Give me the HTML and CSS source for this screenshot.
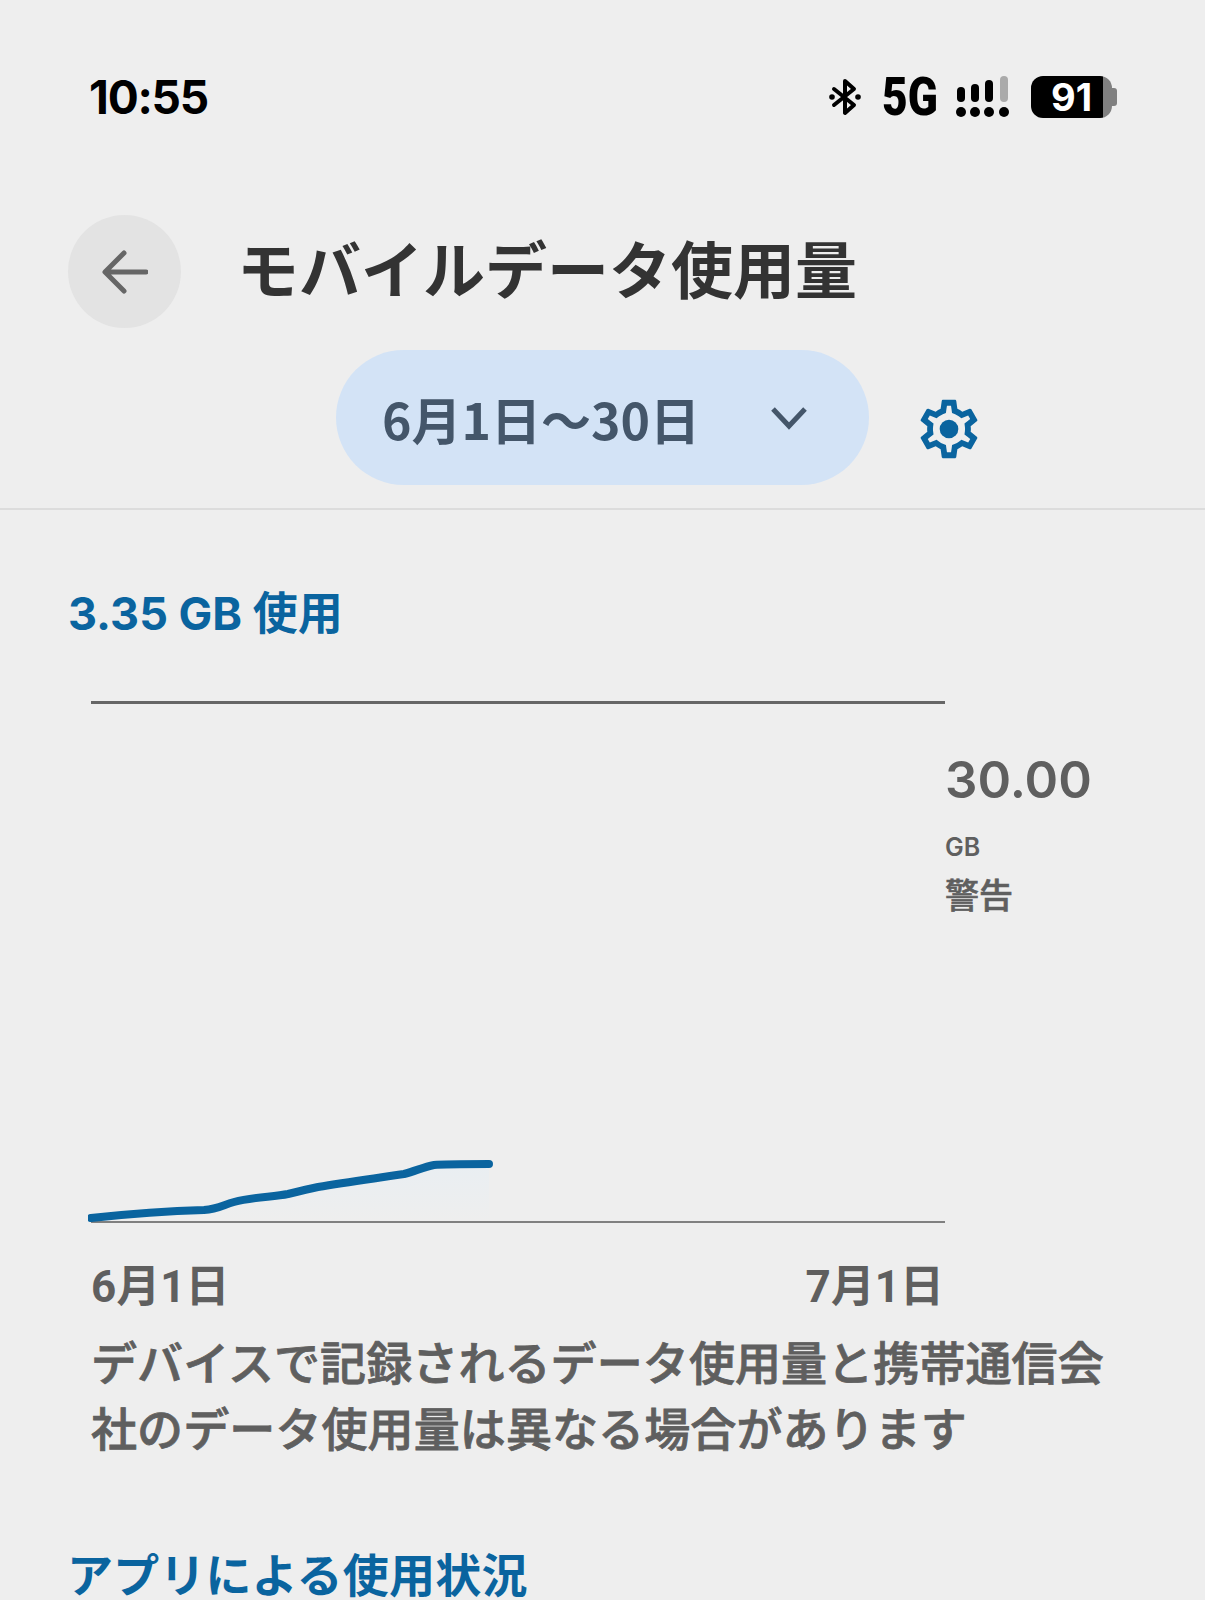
FILE: index.html
```html
<!DOCTYPE html>
<html lang="ja">
<head>
  <meta charset="UTF-8">
  <meta name="viewport" content="width=device-width, initial-scale=1.0">
  <title>モバイルデータ使用量</title>
  <link rel="stylesheet" href="styles.css">
</head>
<body>
  <div class="status-bar">
    <span class="status-time">10:55</span>
    <div class="status-icons">
      <svg class="icon-bluetooth" width="32" height="38" viewBox="0 0 32 38">
        <path d="M5 11 L25 27 L16 35 V3 L25 11 L5 27" fill="none" stroke="#000" stroke-width="4" stroke-linecap="round" stroke-linejoin="round"/>
        <circle cx="3" cy="19" r="2.8" fill="#000"/>
        <circle cx="29" cy="19" r="2.8" fill="#000"/>
      </svg>
      <span class="status-network">5G</span>
      <svg class="icon-signal" width="54" height="42" viewBox="0 0 54 42">
        <rect x="2" y="11" width="8" height="15" rx="4" fill="#000"/>
        <rect x="16" y="8" width="8" height="18" rx="4" fill="#000"/>
        <rect x="30" y="4" width="8" height="22" rx="4" fill="#000"/>
        <rect x="45" y="0" width="8" height="26" rx="4" fill="#aaa"/>
        <circle cx="6" cy="36" r="5" fill="#000"/>
        <circle cx="20" cy="36" r="5" fill="#000"/>
        <circle cx="34" cy="36" r="5" fill="#000"/>
        <circle cx="49" cy="36" r="5" fill="#000"/>
      </svg>
      <div class="battery">
        <div class="battery-body"><span>91</span></div>
        <div class="battery-tip"></div>
      </div>
    </div>
  </div>

  <div class="page-header">
    <button class="back-btn" type="button">
      <svg width="46" height="46" viewBox="0 0 46 46">
        <path d="M44 23 H4 M22 4 L3 23 L22 42" fill="none" stroke="#666" stroke-width="5" stroke-linecap="round" stroke-linejoin="round"/>
      </svg>
    </button>
    <h1>モバイルデータ使用量</h1>
  </div>

  <div class="cycle-row">
    <div class="cycle-pill">
      <span>6月1日〜30日</span>
      <svg width="36" height="24" viewBox="0 0 36 24">
        <path d="M2 3 L18 20 L34 3" fill="none" stroke="#44566a" stroke-width="5"/>
      </svg>
    </div>
    <svg class="icon-gear" width="70" height="70" viewBox="0 0 24 24">
      <path fill="#0a649f" d="M19.43 12.98c.04-.32.07-.64.07-.98s-.03-.66-.07-.98l2.11-1.65c.19-.15.24-.42.12-.64l-2-3.46c-.12-.22-.39-.3-.61-.22l-2.49 1c-.52-.4-1.08-.73-1.69-.98l-.38-2.65C14.46 2.18 14.25 2 14 2h-4c-.25 0-.46.18-.49.42l-.38 2.65c-.61.25-1.17.59-1.69.98l-2.49-1c-.23-.09-.49 0-.61.22l-2 3.46c-.13.22-.07.49.12.64l2.11 1.65c-.04.32-.07.65-.07.98s.03.66.07.98l-2.11 1.65c-.19.15-.24.42-.12.64l2 3.46c.12.22.39.3.61.22l2.49-1c.52.4 1.08.73 1.69.98l.38 2.65c.03.24.24.42.49.42h4c.25 0 .46-.18.49-.42l.38-2.65c.61-.25 1.17-.59 1.69-.98l2.49 1c.23.09.49 0 .61-.22l2-3.46c.12-.22.07-.49-.12-.64l-2.11-1.65zM17.45 11.27c.04.31.05.52.05.73 0 .21-.02.43-.05.73l-.14 1.13.89.7 1.08.84-.7 1.21-1.27-.51-1.04-.42-.9.68c-.43.32-.84.56-1.25.73l-1.06.43-.16 1.13-.2 1.35h-1.4l-.19-1.35-.16-1.13-1.06-.43c-.43-.18-.83-.41-1.23-.71l-.91-.7-1.06.43-1.27.51-.7-1.21 1.08-.84.89-.7-.14-1.13c-.03-.31-.05-.54-.05-.74s.02-.43.05-.73l.14-1.13-.89-.7-1.08-.84.7-1.21 1.27.51 1.04.42.9-.68c.43-.32.84-.56 1.25-.73l1.06-.43.16-1.13.2-1.35h1.39l.19 1.35.16 1.13 1.06.43c.43.18.83.41 1.23.71l.91.7 1.06-.43 1.27-.51.7 1.21-1.07.85-.89.7.14 1.13z"/>
      <circle cx="12" cy="12" r="3.2" fill="#0a649f"/>
    </svg>
  </div>

  <div class="content">
    <div class="usage-total">3.35 GB 使用</div>

    <div class="chart">
      <div class="chart-plot">
        <svg class="chart-line" width="410" height="70" viewBox="0 0 410 70">
          <defs>
            <linearGradient id="usage-fill" x1="0" y1="0" x2="0" y2="1">
              <stop offset="0" stop-color="#e9eef2"/>
              <stop offset="1" stop-color="#eeeeee"/>
            </linearGradient>
          </defs>
          <path d="M3 67 C40 62 80 59 116 58 C130 57 135 53 146 50 C165 45 185 45 200 42 C212 39 220 37 230 35 C260 30 290 26 316 22 C328 19 335 15 346 13 C355 12 380 12 401 12 V68 H3 Z" fill="url(#usage-fill)"/>
          <path d="M3 66 C40 62 80 59 116 58 C130 57 135 53 146 50 C165 45 185 45 200 42 C212 39 220 37 230 35 C260 30 290 26 316 22 C328 19 335 15 346 13 C355 12 380 12 401 12" fill="none" stroke="#0a649f" stroke-width="8" stroke-linecap="round"/>
        </svg>
      </div>
      <div class="chart-limit">
        <div class="limit-value">30.00</div>
        <div class="limit-unit">GB</div>
        <div class="limit-label">警告</div>
      </div>
    </div>

    <div class="chart-dates">
      <span>6月1日</span>
      <span>7月1日</span>
    </div>

    <p class="chart-note">デバイスで記録されるデータ使用量と携帯通信会社のデータ使用量は異なる場合があります</p>

    <h2 class="section-title">アプリによる使用状況</h2>
  </div>
</body>
</html>
```

FILE: styles.css
```css
* {
  margin: 0;
  padding: 0;
  box-sizing: border-box;
}

html,
body {
  height: 1600px;
  overflow: hidden;
}

body {
  font-family: "Noto Sans CJK JP", Roboto, sans-serif;
  background: #eeeeee;
  color: #333;
}

.status-bar {
  display: flex;
  justify-content: space-between;
  align-items: center;
  height: 42px;
  margin-top: 76px;
  padding: 0 88px 0 89px;
}

.status-time {
  font-family: Inter, Roboto, sans-serif;
  font-size: 46px;
  font-weight: 700;
  letter-spacing: -1.2px;
  color: #000;
}

.status-icons {
  display: flex;
  align-items: center;
}

.status-network {
  display: inline-block;
  width: 55px;
  margin: 0 18px 0 21px;
  font-family: Roboto, sans-serif;
  font-size: 54px;
  font-weight: 900;
  line-height: 42px;
  color: #000;
  transform: scaleX(0.82);
  transform-origin: left center;
}

.battery {
  display: flex;
  align-items: center;
  margin-left: 22px;
}

.battery-body {
  width: 81px;
  height: 42px;
  border-radius: 12px;
  background: linear-gradient(90deg, #000 89%, #808080 89%);
  display: flex;
  align-items: center;
  justify-content: center;
}

.battery-body span {
  font-family: Inter, Roboto, sans-serif;
  font-size: 38px;
  font-weight: 700;
  color: #fff;
}

.battery-tip {
  width: 5px;
  height: 18px;
  border-radius: 0 3px 3px 0;
  background: #808080;
}

.page-header {
  display: flex;
  align-items: center;
  gap: 56px;
  margin-top: 97px;
  padding-left: 68px;
}

.back-btn {
  width: 113px;
  height: 113px;
  border: none;
  border-radius: 50%;
  background: #e3e3e3;
  display: flex;
  align-items: center;
  justify-content: center;
}

.page-header h1 {
  padding-bottom: 10px;
  font-size: 62px;
  font-weight: 700;
  line-height: 74px;
  color: #333;
}

.cycle-row {
  display: flex;
  align-items: center;
  gap: 45px;
  height: 159px;
  margin-top: 23px;
  padding: 0 0 24px 336px;
  border-bottom: 2px solid #dcdcdc;
}

.cycle-pill {
  display: flex;
  align-items: center;
  justify-content: space-between;
  width: 533px;
  height: 135px;
  padding: 0 62px 0 46px;
  border-radius: 68px;
  background: #d3e3f6;
  font-size: 50px;
  font-weight: 700;
  color: #44566a;
}

.icon-gear {
  margin-top: 22px;
}

.content {
  padding: 0 0 0 69px;
}

.usage-total {
  margin: 74px 0 0 -1px;
  font-family: Inter, "Noto Sans CJK JP", sans-serif;
  font-size: 45px;
  font-weight: 700;
  line-height: 60px;
  color: #0a649f;
}

.chart {
  display: flex;
  margin: 57px 0 0 22px;
}

.chart-plot {
  position: relative;
  width: 854px;
  height: 522px;
  border-top: 3px solid #666;
  border-bottom: 2px solid #808080;
}

.chart-line {
  position: absolute;
  left: -3px;
  bottom: -1px;
}

.chart-limit {
  padding-top: 48px;
  color: #5f5f5f;
}

.limit-value {
  font-family: Inter, Roboto, sans-serif;
  font-size: 51px;
  font-weight: 600;
  line-height: 62px;
}

.limit-unit {
  margin-top: 20px;
  font-family: Inter, Roboto, sans-serif;
  font-size: 25px;
  font-weight: 600;
  line-height: 32px;
}

.limit-label {
  margin-top: 9px;
  font-size: 34px;
  font-weight: 500;
  line-height: 44px;
  -webkit-text-stroke: 0.6px #5f5f5f;
}

.chart-dates {
  display: flex;
  justify-content: space-between;
  width: 853px;
  margin: 34px 0 0 22px;
  font-family: Roboto, "Noto Sans CJK JP", sans-serif;
  font-size: 44px;
  font-weight: 700;
  line-height: 60px;
  color: #5f5f5f;
}

.chart-note {
  width: 1030px;
  margin: 10px 0 0 22px;
  font-size: 46px;
  font-weight: 500;
  letter-spacing: 0.1px;
  line-height: 66px;
  color: #5f5f5f;
  -webkit-text-stroke: 0.8px #5f5f5f;
}

.section-title {
  margin: 88px 0 0 -2px;
  font-size: 46px;
  font-weight: 700;
  letter-spacing: 0.2px;
  line-height: 50px;
  color: #0a649f;
}
```
